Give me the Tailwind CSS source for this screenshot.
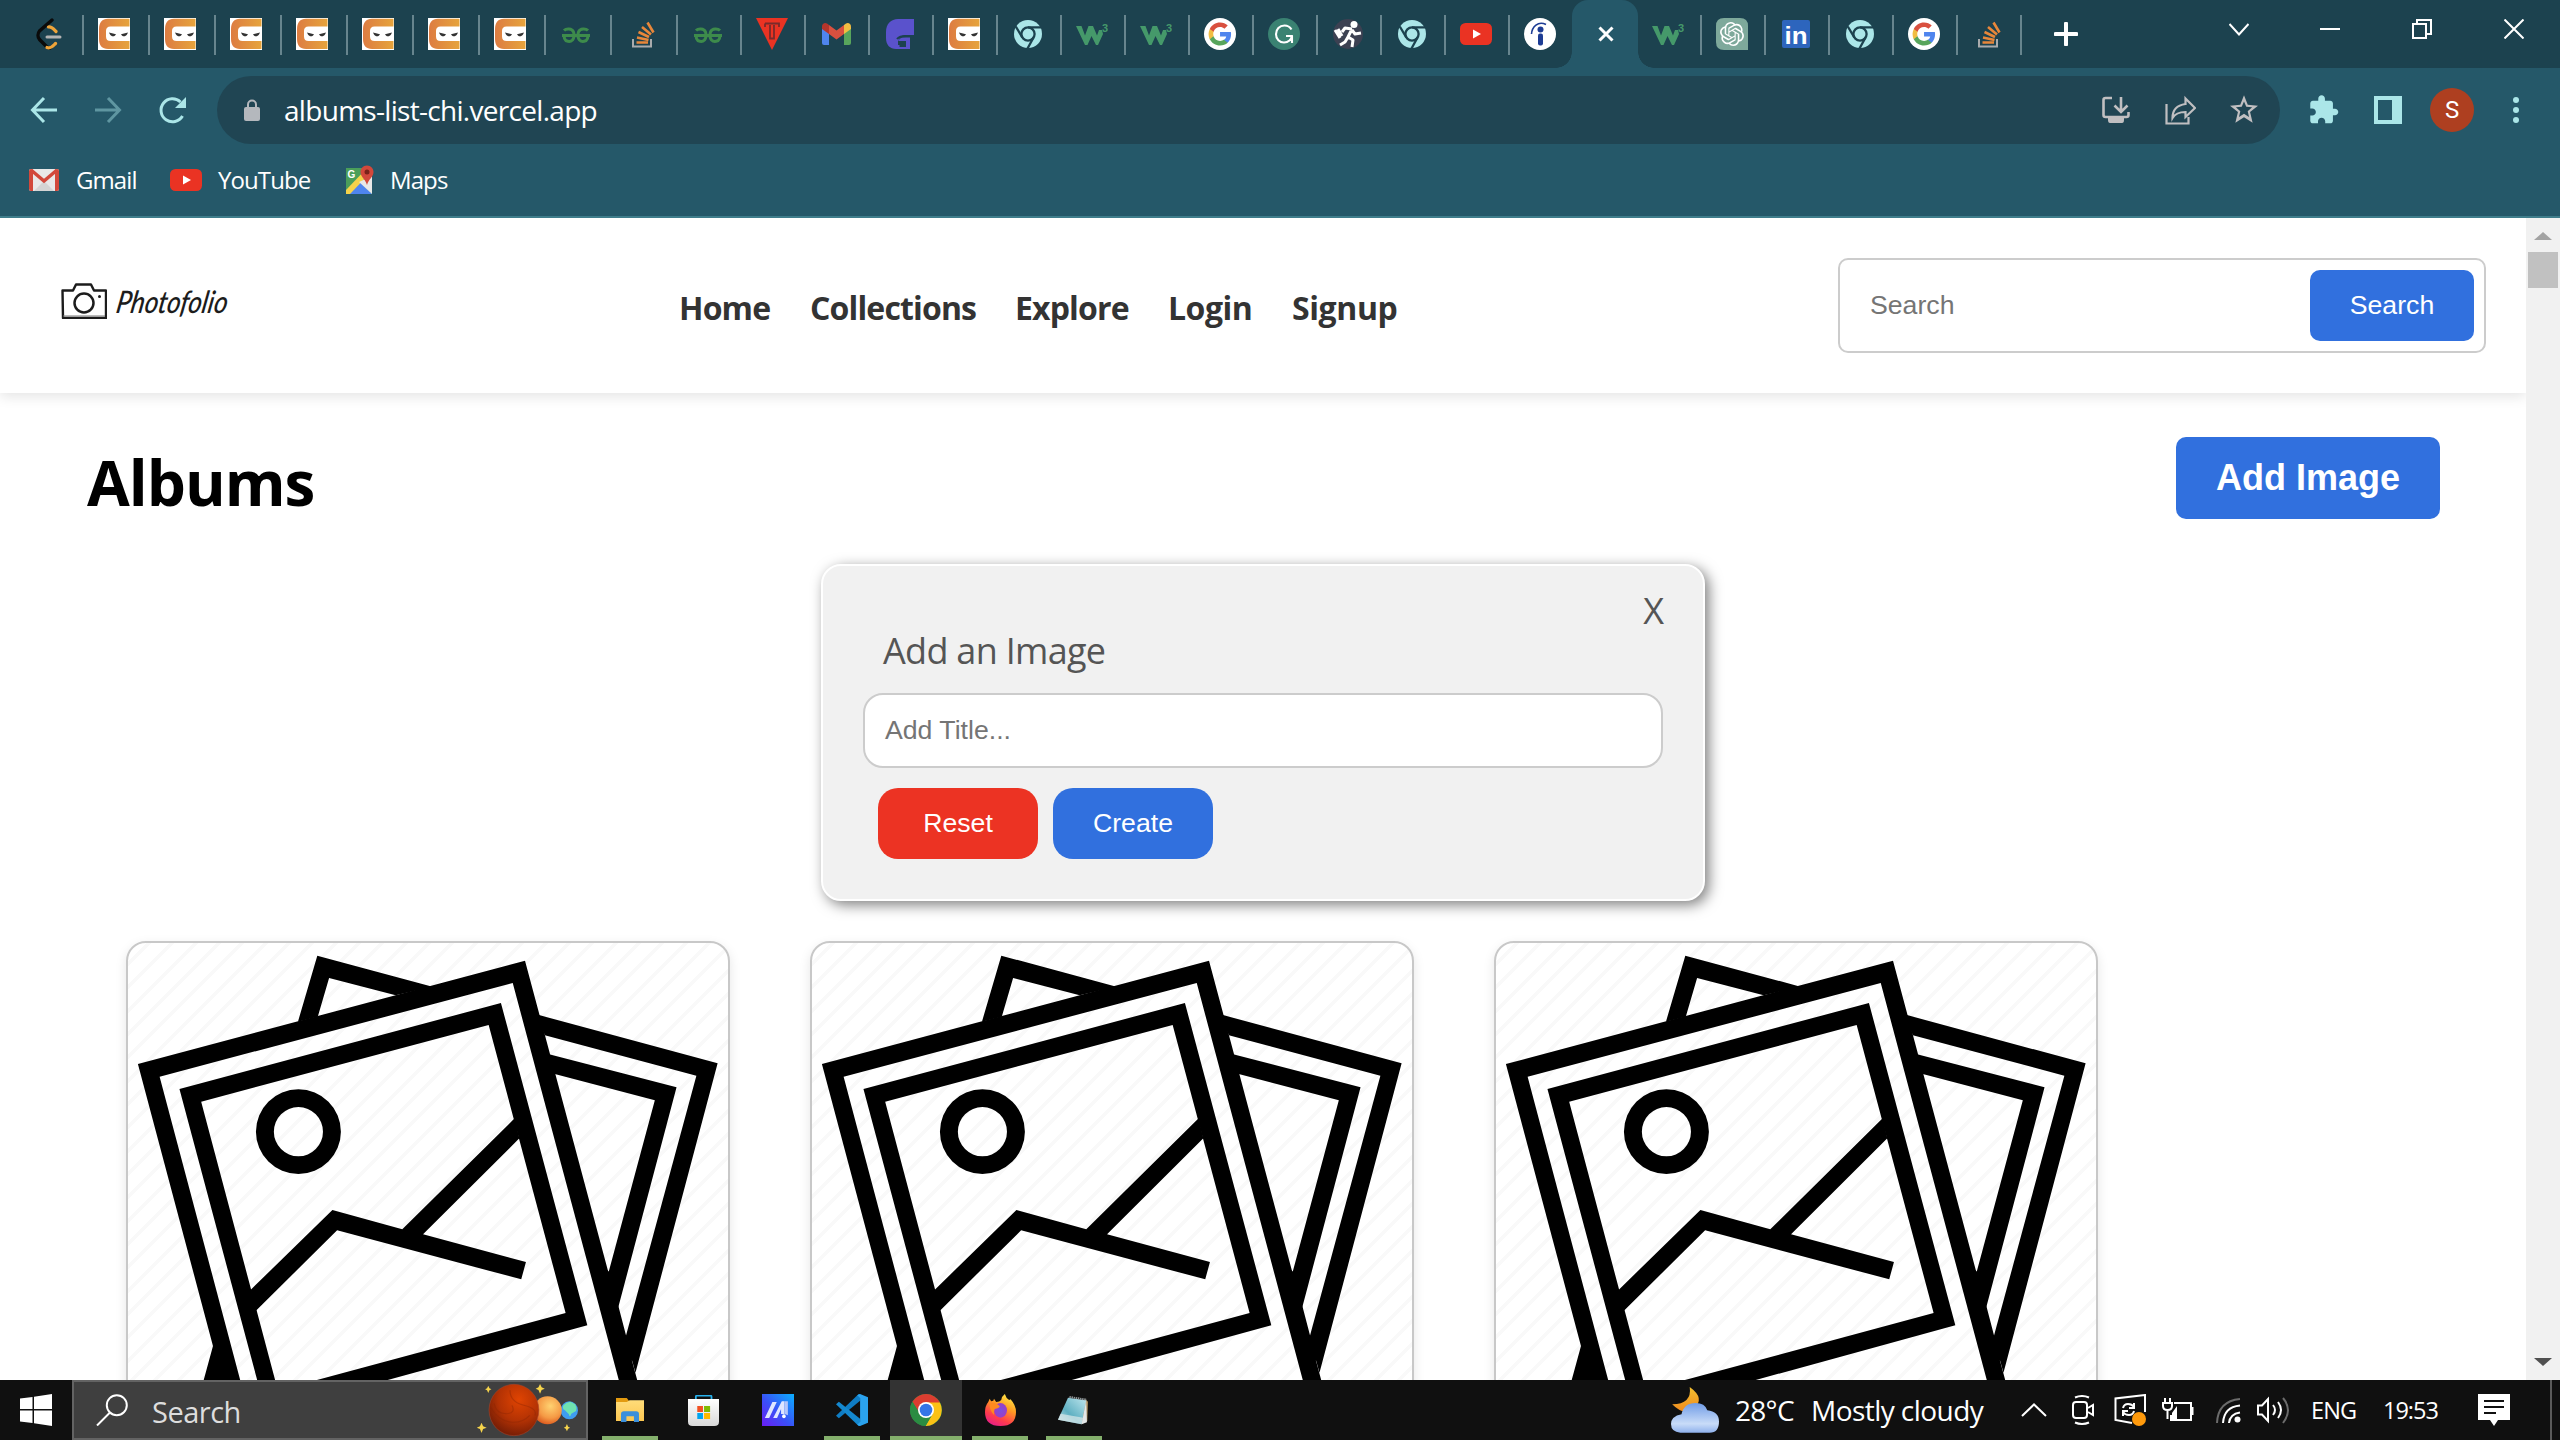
<!DOCTYPE html>
<html lang="en">
<head>
<meta charset="utf-8">
<title>Photofolio</title>
<script src="https://cdn.jsdelivr.net/npm/@tailwindcss/browser@4"></script>
</head>
<body class="w-[2560px] h-[1440px] overflow-hidden flex flex-col bg-white font-['Open_Sans','Noto_Sans',sans-serif]">

<!-- Shared icon symbols -->
<svg width="0" height="0" class="absolute">
  <defs>
    <linearGradient id="ninjaG" x1="0" y1="0" x2="1" y2="0"><stop offset="0" stop-color="#dd7c42"/><stop offset="1" stop-color="#e6a43c"/></linearGradient>
    <linearGradient id="moonG" x1="0" y1="0" x2="0" y2="1"><stop offset="0" stop-color="#f3c030"/><stop offset="1" stop-color="#ef8a1e"/></linearGradient>
    <linearGradient id="cloudG" x1="0" y1="0" x2="0" y2="1"><stop offset="0" stop-color="#6f9be6"/><stop offset=".7" stop-color="#c9dcf8"/><stop offset="1" stop-color="#8fb1ec"/></linearGradient>
    <linearGradient id="folderG" x1="0" y1="0" x2="0" y2="1"><stop offset="0" stop-color="#ffdc79"/><stop offset="1" stop-color="#fcc751"/></linearGradient>
    <linearGradient id="storeG" x1="0" y1="0" x2="0" y2="1"><stop offset="0" stop-color="#ffffff"/><stop offset="1" stop-color="#d9d9d9"/></linearGradient>
    <linearGradient id="asusG" x1="0" y1="1" x2="1" y2="0"><stop offset="0" stop-color="#6a1df5"/><stop offset=".45" stop-color="#3a50f7"/><stop offset="1" stop-color="#0ab0ff"/></linearGradient>
    <linearGradient id="foxG" x1=".8" y1="0" x2=".3" y2="1"><stop offset="0" stop-color="#fff04a"/><stop offset=".4" stop-color="#ff9a22"/><stop offset=".75" stop-color="#ff3c4c"/><stop offset="1" stop-color="#e81f86"/></linearGradient>
    <radialGradient id="foxP"><stop offset="0" stop-color="#7b4de0"/><stop offset="1" stop-color="#9a3fc4"/></radialGradient>
    <linearGradient id="noteG" x1="1" y1="0" x2="0" y2="1"><stop offset="0" stop-color="#bfe6ee"/><stop offset=".6" stop-color="#5fb0c2"/><stop offset="1" stop-color="#c7dfe4"/></linearGradient>
    <radialGradient id="redP" cx=".6" cy=".3" r=".75"><stop offset="0" stop-color="#e04402"/><stop offset=".55" stop-color="#b33204"/><stop offset="1" stop-color="#6f1b05"/></radialGradient>
    <radialGradient id="orP" cx=".6" cy=".35" r=".7"><stop offset="0" stop-color="#ffd271"/><stop offset=".6" stop-color="#f59a45"/><stop offset="1" stop-color="#d9541a"/></radialGradient>
  </defs>
  <symbol id="ninja" viewBox="0 0 32 32"><rect width="32" height="32" fill="#fff"/><path d="M31.500 .7H10C4 .7 1 4.500 1 11v10c0 6.500 3 10 9 10h21.500v-8H12.500c-3 0-4.500-1.500-4.500-4.500v-5.500C8 10 9.500 8.500 12.500 8.500h19z" fill="url(#ninjaG)"/><path d="M11 14.500l7 1.800c-1 2.500-4.500 2.800-6 .2zM30 14.500l-7 1.800c1 2.500 4.500 2.800 6 .2z" fill="#333"/></symbol>
  <symbol id="gfg" viewBox="0 0 32 32"><g fill="none" stroke="#3d8b4b" stroke-width="3"><path d="M2 17.500h28M4 12.500c2-2 8-2.500 9.500 1.500 1 3 .5 6-1 8-2.500 2.500-7 1.500-8-1.500l-.5-3M28 12.500c-2-2-8-2.500-9.500 1.500-1 3-.5 6 1 8 2.500 2.500 7 1.500 8-1.500l.5-3"/></g></symbol>
  <symbol id="so" viewBox="0 0 32 32"><path d="M7 21v7.500h18V21" fill="none" stroke="#a9abad" stroke-width="2"/><g stroke="#e8873a" stroke-width="2.600"><path d="M10.500 24.500h11.500M11 19.500l11.500 2.500M12.500 14l10.500 5M16 9l9 7.500M21.500 4.500l6 10"/></g></symbol>
  <symbol id="chromeC" viewBox="0 0 32 32"><circle cx="16" cy="16" r="14" fill="#abe6e8"/><circle cx="16" cy="16" r="6.600" fill="none" stroke="#1c424f" stroke-width="2.300"/><path d="M16 9.400h13M10.300 19.300L3.800 8.500M21.700 19.300L15.500 30.500" stroke="#1c424f" stroke-width="2.300"/></symbol>
  <symbol id="w3" viewBox="0 0 32 32"><path d="M0 8h5.500L9 17.500 12.500 8H17l4 9.500L23 12h3l1 4-5 11h-2l-4.500-9L11.500 27H9z" fill="#45996a"/></symbol>
  <symbol id="google" viewBox="0 0 32 32"><circle cx="16" cy="16" r="16" fill="#fff"/><g transform="translate(3.500 3.500) scale(1.045)"><path fill="#4f85ee" d="M22.560 12.250c0-.78-.07-1.530-.2-2.250H12v4.260h5.920c-.26 1.370-1.040 2.530-2.210 3.310v2.770h3.570c2.080-1.920 3.280-4.740 3.280-8.090z"/><path fill="#58a55c" d="M12 23c2.970 0 5.460-.98 7.280-2.660l-3.570-2.770c-.98.66-2.230 1.060-3.710 1.060-2.860 0-5.290-1.930-6.160-4.530H2.180v2.840C3.990 20.530 7.700 23 12 23z"/><path fill="#f1bd42" d="M5.840 14.090c-.22-.66-.35-1.360-.35-2.090s.13-1.430.35-2.090V7.070H2.180C1.430 8.550 1 10.220 1 12s.43 3.450 1.180 4.930l2.850-2.220.81-.62z"/><path fill="#d9503f" d="M12 5.380c1.620 0 3.060.56 4.210 1.640l3.150-3.150C17.450 2.090 14.970 1 12 1 7.700 1 3.990 3.470 2.180 7.070l3.660 2.840c.87-2.600 3.300-4.530 6.160-4.530z"/></g></symbol>
  <symbol id="yt" viewBox="0 0 32 32"><rect x="0" y="5" width="32" height="22" rx="5.500" fill="#ea3323"/><path d="M13 11.500v9l8-4.500z" fill="#fff"/></symbol>
  <symbol id="cardArt" viewBox="60 69 1271 1311" preserveAspectRatio="none">
    <g fill="#000">
      <path d="M461 107L705 200 627 226 486 174 462 290 420 305Z"/>
      <path d="M925 283L1309 430 1135 1358 1114 1252 1264 467 943 346Z"/>
      <path d="M948 401L1222 502 1098 1165 1078 1057 1176 541 962 461Z"/>
      <path d="M1068 1040L1080 1057 1100 1165 1116 1252 1130 1320 1120 1320Z"/>
      <path d="M81 432L901 122 1139 1382 1100 1382 875 189 127 470 298 1382 220 1382 240 1278Z"/>
      <path d="M169 507L850 249 1033 1216 605 1382 455 1382 987 1179 824 315 215 545 372 1382 334 1382Z"/>
      <path d="M318 1112L493 870 641 928 879 595 889 655 685 943 903 1026 893 1078 503 931 331 1172Z"/>
      <path fill-rule="evenodd" d="M331 635A90 127 0 0 1 511 635A90 127 0 0 1 331 635ZM369 635A52 74 0 0 0 473 635A52 74 0 0 0 369 635Z"/>
    </g>
  </symbol>
</svg>

<!-- Tab strip -->
<div class="flex h-[68px] shrink-0 bg-[#1c424f] [&>.t]:flex [&>.t]:items-center [&>.t]:pl-[14px] [&>.t]:relative [&>.t]:after:absolute [&>.t]:after:right-0 [&>.t]:after:top-[15px] [&>.t]:after:w-[2px] [&>.t]:after:h-[40px] [&>.t]:after:bg-[#67858e]">
  <div class="t w-[84px]"><svg class="size-8 ml-[19px]" viewBox="0 0 32 32" fill="none" stroke-linecap="round"><path d="M19 2L6.500 13c-2 2.500-2 6 0 8.500l7 7c1 1 2 1.500 3.500 1.500" stroke="#0a0a0a" stroke-width="3.400"/><path d="M15.500 9c3-.5 5 2 7.500 4.500M14 29.500c4 1.500 6-1.500 8.500-4" stroke="#eea43a" stroke-width="3.200"/><path d="M14 19h13" stroke="#b3b3b3" stroke-width="3"/></svg></div>
  <div class="t w-[66px]"><svg class="size-8"><use href="#ninja"/></svg></div>
  <div class="t w-[66px]"><svg class="size-8"><use href="#ninja"/></svg></div>
  <div class="t w-[66px]"><svg class="size-8"><use href="#ninja"/></svg></div>
  <div class="t w-[66px]"><svg class="size-8"><use href="#ninja"/></svg></div>
  <div class="t w-[66px]"><svg class="size-8"><use href="#ninja"/></svg></div>
  <div class="t w-[66px]"><svg class="size-8"><use href="#ninja"/></svg></div>
  <div class="t w-[66px]"><svg class="size-8"><use href="#ninja"/></svg></div>
  <div class="t w-[66px]"><svg class="size-8"><use href="#gfg"/></svg></div>
  <div class="t w-[66px]"><svg class="size-8"><use href="#so"/></svg></div>
  <div class="t w-[64px]"><svg class="size-8"><use href="#gfg"/></svg></div>
  <div class="t w-[64px]"><svg class="size-8" viewBox="0 0 32 32"><path d="M0 0h32L16 32z" fill="#ea3323"/><path d="M9 5.500h14v3.500M9 9V5.500M14 7v13.500h4V7" fill="none" stroke="#7a2b2b" stroke-width="1.800"/></svg></div>
  <div class="t w-[64px]"><svg class="size-8" viewBox="0 0 32 32"><path d="M2 9l7 5v13H4a2 2 0 0 1-2-2z" fill="#4f85ee"/><path d="M31 9l-7 5v13h5a2 2 0 0 0 2-2z" fill="#58a55c"/><path d="M24 7l2-1.500c2-1.500 5 0 5 3V11l-7 5z" fill="#f1bd42"/><path d="M2 8.500c0-3 3-4.500 5-3L9 7v9l-7-5z" fill="#b5352b"/><path d="M9 7l7.500 5.500L24 7v9l-7.500 5.500L9 16z" fill="#d9503f"/></svg></div>
  <div class="t w-[64px]"><svg class="size-8" viewBox="0 0 32 32"><path d="M30 1v16h-8c-6 0-8 5-8 8v6h-2C6 31 2 27 2 20v-6C2 6 7 1 14 1z" fill="#5a52cc"/><path d="M14 30v-5c0-3 2-5.500 5.500-5.500H26V31H14z" fill="#5a52cc"/><path d="M13 21c2-2.500 5-3 9-3h5M15 27v-3h6v5" fill="none" stroke="#1c424f" stroke-width="2"/><rect x="15.500" y="24" width="6" height="5" fill="#1c424f"/></svg></div>
  <div class="t w-[64px]"><svg class="size-8"><use href="#ninja"/></svg></div>
  <div class="t w-[64px]"><svg class="size-8"><use href="#chromeC"/></svg></div>
  <div class="t w-[64px]"><svg class="size-8"><use href="#w3"/><text x="26" y="13.500" font-size="11" font-weight="700" font-family="Liberation Sans" fill="#45996a">3</text></svg></div>
  <div class="t w-[64px]"><svg class="size-8"><use href="#w3"/><text x="26" y="13.500" font-size="11" font-weight="700" font-family="Liberation Sans" fill="#45996a">3</text></svg></div>
  <div class="t w-[64px]"><svg class="size-8"><use href="#google"/></svg></div>
  <div class="t w-[64px]"><svg class="size-8" viewBox="0 0 32 32"><circle cx="16" cy="16" r="16" fill="#3a8272"/><path d="M23.500 11.500C22 9 19.500 7.500 16.500 7.500c-5 0-8.500 3.800-8.500 8.700 0 5 3.700 8.300 8 8.300 4.500 0 7.500-3 7.700-6.500H18M24 17.500V25" fill="none" stroke="#fff" stroke-width="2.100"/></svg></div>
  <div class="t w-[64px]"><svg class="size-8" viewBox="0 0 32 32"><circle cx="16" cy="16" r="15" fill="#3c4152"/><circle cx="22" cy="6.500" r="3.500" fill="#fff"/><path d="M20 11l-4 8 5 3-1 7M16 19l-3 5-5 3M20 11l-7-1-3 4M20 12l3 4 6-1M3 12l5 8M6 11l4 7" fill="none" stroke="#fff" stroke-width="3" stroke-linejoin="round"/></svg></div>
  <div class="t w-[64px]"><svg class="size-8"><use href="#chromeC"/></svg></div>
  <div class="t w-[64px]"><svg class="size-8"><use href="#yt"/></svg></div>
  <div class="flex items-center w-[62px] pl-[14px]"><svg class="size-8" viewBox="0 0 32 32"><circle cx="16" cy="16" r="16" fill="#fff"/><circle cx="16.500" cy="11.500" r="3" fill="#1d3c94"/><rect x="14" y="15.500" width="5" height="12" rx="2" fill="#1d3c94"/><path d="M7.500 16C8 9 14 2.500 22 6.500" fill="none" stroke="#1d3c94" stroke-width="1.600"/></svg></div>
  <div class="flex items-center justify-center w-[66px] rounded-t-[16px] bg-[#255869] relative">
    <span class="absolute bottom-0 -left-4 size-4 bg-[radial-gradient(circle_at_0_0,#1c424f_15.500px,#255869_16px)]"></span>
    <span class="absolute bottom-0 -right-4 size-4 bg-[radial-gradient(circle_at_100%_0,#1c424f_15.500px,#255869_16px)]"></span>
    <svg class="size-4 ml-[1px]" viewBox="0 0 16 16"><path d="M1.500 1.500l13 13M14.500 1.500l-13 13" stroke="#fff" stroke-width="3"/></svg>
  </div>
  <div class="t w-[64px]"><svg class="size-8"><use href="#w3"/><text x="26" y="13.500" font-size="11" font-weight="700" font-family="Liberation Sans" fill="#45996a">3</text></svg></div>
  <div class="t w-[64px]"><svg class="size-8" viewBox="0 0 32 32"><path d="M8 0h16q8 0 8 8v24H8q-8 0-8-8V8q0-8 8-8z" fill="#7ea99b"/><path transform="translate(4 4)" fill="#fff" d="M22.282 9.821a5.985 5.985 0 0 0-.516-4.910 6.046 6.046 0 0 0-6.510-2.900A6.065 6.065 0 0 0 4.981 4.182a5.985 5.985 0 0 0-3.998 2.900 6.046 6.046 0 0 0 .743 7.097 5.980 5.980 0 0 0 .511 4.911 6.051 6.051 0 0 0 6.515 2.900A5.985 5.985 0 0 0 13.260 24a6.056 6.056 0 0 0 5.772-4.206 5.990 5.990 0 0 0 3.998-2.900 6.056 6.056 0 0 0-.748-7.073zm-9.022 12.608a4.476 4.476 0 0 1-2.876-1.041l.142-.080 4.778-2.758a.795.795 0 0 0 .393-.681v-6.737l2.020 1.169a.071.071 0 0 1 .038.052v5.583a4.504 4.504 0 0 1-4.495 4.494zm-9.661-4.125a4.471 4.471 0 0 1-.535-3.014l.142.085 4.783 2.758a.771.771 0 0 0 .781 0l5.843-3.369v2.332a.080.080 0 0 1-.033.062L9.740 19.950a4.499 4.499 0 0 1-6.141-1.646zM2.341 7.896a4.485 4.485 0 0 1 2.366-1.973V11.600a.766.766 0 0 0 .388.677l5.814 3.354-2.020 1.169a.076.076 0 0 1-.071 0l-4.830-2.787A4.504 4.504 0 0 1 2.341 7.872zm16.596 3.856L13.104 8.364 15.119 7.200a.076.076 0 0 1 .071 0l4.830 2.791a4.494 4.494 0 0 1-.677 8.104v-5.677a.790.790 0 0 0-.407-.667zm2.011-3.023l-.142-.085-4.774-2.782a.776.776 0 0 0-.785 0L9.409 9.230V6.897a.066.066 0 0 1 .028-.062l4.830-2.787a4.499 4.499 0 0 1 6.680 4.660zM8.307 12.863l-2.020-1.164a.080.080 0 0 1-.038-.057V6.074a4.499 4.499 0 0 1 7.376-3.454l-.142.081L8.704 5.459a.795.795 0 0 0-.393.681zm1.098-2.365l2.602-1.500 2.607 1.500v2.999l-2.597 1.500-2.607-1.500Z"/></svg></div>
  <div class="t w-[64px]"><svg class="size-8" viewBox="0 0 32 32"><rect x="2" y="2" width="28" height="28" rx="2" fill="#2d65bd"/><text x="4.500" y="25.500" font-family="Liberation Sans" font-weight="700" font-size="24" textLength="23" lengthAdjust="spacingAndGlyphs" fill="#fff">in</text></svg></div>
  <div class="t w-[64px]"><svg class="size-8"><use href="#chromeC"/></svg></div>
  <div class="t w-[64px]"><svg class="size-8"><use href="#google"/></svg></div>
  <div class="t w-[64px]"><svg class="size-8"><use href="#so"/></svg></div>
  <div class="flex items-center pl-8"><svg class="size-6" viewBox="0 0 24 24"><path d="M12 1.500v21M1.500 12h21" stroke="#fff" stroke-width="4" stroke-linecap="round"/></svg></div>
  <div class="flex items-start ml-auto pt-[19px] pr-9 gap-[72px]">
    <svg class="size-5 ml-[1px] mr-[-1px]" viewBox="0 0 20 20"><path d="M.5 5l9.500 10.500L19.500 5" fill="none" stroke="#fff" stroke-width="2"/></svg>
    <svg class="size-5" viewBox="0 0 20 20"><path d="M0 10h20" stroke="#fff" stroke-width="2"/></svg>
    <svg class="size-5" viewBox="0 0 20 20"><path d="M1 5h13v14H1zM5 5V1h14v14h-5" fill="none" stroke="#fff" stroke-width="2"/></svg>
    <svg class="size-5" viewBox="0 0 20 20"><path d="M.5 .5l19 19M19.500 .5l-19 19" stroke="#fff" stroke-width="2"/></svg>
  </div>
</div>

<!-- Toolbar -->
<div class="flex items-center h-[84px] shrink-0 bg-[#255869] pl-7">
  <div class="flex gap-8 w-[189px]">
    <svg class="size-8" viewBox="0 0 32 32"><path d="M29 16H5M16 4L4.500 16 16 28" fill="none" stroke="#abe6e8" stroke-width="3"/></svg>
    <svg class="size-8" viewBox="0 0 32 32"><path d="M3 16h24M16 4l11.500 12L16 28" fill="none" stroke="#5f96a1" stroke-width="3"/></svg>
    <svg class="size-8" viewBox="0 0 32 32"><path d="M26.500 22A11.500 11.500 0 1 1 24.500 8" fill="none" stroke="#abe6e8" stroke-width="3"/><path d="M30 3v11H19z" fill="#abe6e8"/></svg>
  </div>
  <div class="flex items-center w-[2063px] h-[68px] rounded-full bg-[#204553] pl-[27px] pr-[20px]">
    <svg class="w-4 h-[22px]" viewBox="0 0 16 22"><path d="M4 9V5.500a4 4 0 0 1 8 0V9" fill="none" stroke="#b4b8bd" stroke-width="2"/><rect y="8" width="16" height="14" rx="2" fill="#b4b8bd"/></svg>
    <span class="pl-[24px] text-[28px] leading-none tracking-[-0.7px] text-white whitespace-nowrap">albums-list-chi.vercel.app</span>
    <div class="flex items-center gap-8 ml-auto">
      <svg class="size-8" viewBox="0 0 32 32"><path d="M12 4H5.500Q3.500 4 3.500 6v15q0 2 2 2h21q2 0 2-2v-3" fill="none" stroke="#c0bfc1" stroke-width="2.600"/><path d="M8 23h16v3q0 3-2 3H10q-2 0-2-3z" fill="#c0bfc1"/><path d="M21 3v13M14.500 11.500L21 18l6.500-6.500" fill="none" stroke="#c0bfc1" stroke-width="2.600"/></svg>
      <svg class="size-8" viewBox="0 0 32 32"><path d="M2.500 10v19.500h22V23" fill="none" stroke="#c0bfc1" stroke-width="2.200"/><path d="M21.500 4.500L31 14l-9.500 9v-5c-6 0-10 1-13 6 0-9 6-13 13-14z" fill="none" stroke="#c0bfc1" stroke-width="2.200"/></svg>
      <svg class="size-8" viewBox="1 0.500 22 24"><path fill="#c0bfc1" d="M22.500 9.240l-7.690-.62L12 1.500 9.190 8.630 1.500 9.240l5.960 4.730L5.520 22 12 17.870 18.480 22l-1.930-8.030zM12 15.400l-3.760 2.270 1-4.280-3.320-2.880 4.380-.38L12 6.100l1.710 4.040 4.380.38-3.320 2.880 1 4.280z"/></svg>
    </div>
  </div>
  <div class="flex items-center pl-[28px] gap-8">
    <svg class="size-8" viewBox="0.300 0 24 24"><path fill="#abe6e8" d="M20.500 11H19V7c0-1.100-.9-2-2-2h-4V3.500C13 2.120 11.880 1 10.500 1S8 2.120 8 3.500V5H4c-1.100 0-1.990.9-1.990 2v3.800H3.500c1.490 0 2.700 1.210 2.700 2.700s-1.210 2.700-2.700 2.700H2V20c0 1.100.9 2 2 2h3.800v-1.500c0-1.490 1.210-2.700 2.700-2.700 1.490 0 2.700 1.210 2.700 2.700V22H17c1.100 0 2-.9 2-2v-4h1.500c1.380 0 2.500-1.120 2.500-2.500S21.880 11 20.500 11z"/></svg>
    <svg class="size-8" viewBox="0 0 32 32"><path d="M2 2h28v28H2zM6 6v20h14V6z" fill="#abe6e8" fill-rule="evenodd"/></svg>
  </div>
  <div class="flex items-center justify-center ml-[26px] size-11 rounded-full bg-[#ae3f20] text-white text-[24px] leading-none font-['Roboto']">S</div>
  <div class="flex flex-col gap-1 ml-[39px]"><i class="w-[6px] h-[6px] rounded-full bg-[#abe6e8]"></i><i class="w-[6px] h-[6px] rounded-full bg-[#abe6e8]"></i><i class="w-[6px] h-[6px] rounded-full bg-[#abe6e8]"></i></div>
</div>

<!-- Bookmarks -->
<div class="flex items-center h-[66px] shrink-0 bg-[#255869] pl-7 pb-[8px] border-b-2 border-[#3f7d8b] text-[24px] leading-none tracking-[-0.9px] text-white">
  <svg class="size-8" viewBox="0 0 32 32"><rect x="1" y="5" width="30" height="22" rx="2" fill="#e9e8e8"/><path d="M6 27l10-10 10 10z" fill="#d4d4d4"/><path d="M1 7q0-2 2-2l2 1v21H3q-2 0-2-2zM31 7q0-2-2-2l-2 1v21h2q2 0 2-2z" fill="#d2483b"/><path d="M3 6l13 11L29 6" fill="none" stroke="#d2483b" stroke-width="3.500"/></svg>
  <span class="w-[93px] pl-[16px]">Gmail</span>
  <svg class="size-8 ml-[17px]"><use href="#yt"/></svg>
  <span class="w-[141px] pl-[16px]">YouTube</span>
  <svg class="size-8" viewBox="0 0 32 32"><path d="M3 4h26v26H3z" fill="#4a9e5a"/><path d="M3 30L16 17l13 13z" fill="#4f85ee"/><path d="M3 26L24 4l5 3L7 30H3z" fill="#f5d24a"/><path d="M16 18l13 12V12z" fill="#e8e8e8"/><path d="M24 1.500c4 0 6.500 3 6.500 6.500 0 5-5 7-6.500 13-1.500-6-6.500-8-6.500-13 0-3.500 2.500-6.500 6.500-6.500z" fill="#d2483b"/><circle cx="24" cy="8" r="2.500" fill="#7a2219"/><text x="4.500" y="13.500" font-size="10" font-weight="700" font-family="Liberation Sans" fill="#fff">G</text></svg>
  <span class="pl-[15px]">Maps</span>
</div>

<!-- Page -->
<div class="flex flex-1 min-h-0">
  <div class="flex flex-col w-[2526px] overflow-hidden">
    <header class="flex items-center h-[175px] shrink-0 pl-[61px] pr-[40px] shadow-[0_4px_12px_rgba(0,0,0,0.1)]">
      <div class="flex items-center w-[618px] pb-[9px]">
        <svg class="w-[46px] h-[36px]" viewBox="0 0 46 36" fill="none" stroke="#1c1c1c" stroke-width="2.400"><path d="M1.500 7.500H12l3-6h15l3 6h12V35h-43z" stroke-linejoin="round"/><path d="M2 33h42" stroke="#777" stroke-width="1"/><circle cx="23" cy="20" r="9.500" stroke-width="2.500"/><circle cx="38.500" cy="13.500" r="1.500" fill="#1c1c1c" stroke="none"/></svg>
        <span class="inline-block origin-left -skew-x-12 scale-x-[0.84] pl-[12px] font-['Lato'] italic font-medium text-[31px] leading-none text-[#1c1c1c]">Photofolio</span>
      </div>
      <nav class="flex pt-[4px] text-[32px] leading-none tracking-[-0.85px] font-bold text-[#333]">
        <span class="w-[131px]">Home</span><span class="w-[205px]">Collections</span><span class="w-[153px]">Explore</span><span class="w-[124px] tracking-[-0.5px]">Login</span><span class="tracking-[-0.4px]">Signup</span>
      </nav>
      <div class="flex items-center justify-between ml-auto w-[648px] h-[95px] rounded-[10px] border-2 border-[#ccc] pl-[30px] pr-[10px] font-['Liberation_Sans'] text-[26.670px]">
        <span class="text-[#757575] pb-[2px]">Search</span>
        <button class="w-[164px] h-[71px] pb-[2px] rounded-[10px] bg-[#3170de] text-white">Search</button>
      </div>
    </header>

    <div class="flex items-center justify-between h-[82px] shrink-0 mt-[44px] px-[86px]">
      <h1 class="pt-[8px] pl-[1px] text-[62px] leading-none tracking-[-1px] font-bold text-black">Albums</h1>
      <button class="w-[264px] h-[82px] rounded-[10px] bg-[#3170de] text-white font-['Liberation_Sans'] font-bold text-[36px]">Add Image</button>
    </div>

    <form class="flex flex-col shrink-0 w-[884px] h-[337px] mt-[45px] mx-auto px-[40px] pt-[25px] rounded-[20px] border-2 border-white bg-[#f1f1f1] shadow-[4px_4px_14px_rgba(0,0,0,0.5)]">
      <span class="self-end h-[40px] mr-[-1px] text-[36px] leading-[40px] text-[#555]">X</span>
      <span class="self-start ml-[20px] h-[40px] text-[36px] leading-[40px] tracking-[-0.7px] text-[#555]">Add an Image</span>
      <div class="flex items-center h-[75px] mt-[22px] pl-[20px] pb-[2px] rounded-[20px] border-2 border-[#ccc] bg-white font-['Liberation_Sans'] text-[26.670px] text-[#757575]">Add Title...</div>
      <div class="flex gap-[15px] mt-[20px] pl-[15px] font-['Liberation_Sans'] text-[26.670px] text-white">
        <button type="button" class="w-[160px] h-[71px] pb-[2px] rounded-[20px] bg-[#ec3323]">Reset</button>
        <button type="button" class="w-[160px] h-[71px] pb-[2px] rounded-[20px] bg-[#3170de]">Create</button>
      </div>
    </form>

    <div class="flex gap-[80px] mt-[40px] pl-[126px]">
      <div class="w-[604px] h-[620px] shrink-0 rounded-[20px] border-2 border-[#c8c8c8] shadow-[0_4px_12px_rgba(0,0,0,0.1)] overflow-hidden bg-[repeating-linear-gradient(135deg,#fff_0_13px,#f9f9f9_13px_16.500px)]"><svg class="block w-[600px] h-[437px]"><use href="#cardArt"/></svg></div>
      <div class="w-[604px] h-[620px] shrink-0 rounded-[20px] border-2 border-[#c8c8c8] shadow-[0_4px_12px_rgba(0,0,0,0.1)] overflow-hidden bg-[repeating-linear-gradient(135deg,#fff_0_13px,#f9f9f9_13px_16.500px)]"><svg class="block w-[600px] h-[437px]"><use href="#cardArt"/></svg></div>
      <div class="w-[604px] h-[620px] shrink-0 rounded-[20px] border-2 border-[#c8c8c8] shadow-[0_4px_12px_rgba(0,0,0,0.1)] overflow-hidden bg-[repeating-linear-gradient(135deg,#fff_0_13px,#f9f9f9_13px_16.500px)]"><svg class="block w-[600px] h-[437px]"><use href="#cardArt"/></svg></div>
    </div>
  </div>
  <!-- Scrollbar -->
  <div class="flex flex-col items-center w-[34px] bg-[#f1f1f1] pt-[14px] pb-[14px]">
    <svg class="w-[18px] h-[8px]" viewBox="0 0 18 8"><path d="M9 0l9 8H0z" fill="#a3a3a3"/></svg>
    <div class="w-[30px] h-[36px] mt-[12px] bg-[#c1c1c1]"></div>
    <svg class="w-[18px] h-[8px] mt-auto" viewBox="0 0 18 8"><path d="M9 8l9-8H0z" fill="#505050"/></svg>
  </div>
</div>

<!-- Taskbar -->
<div class="flex h-[60px] shrink-0 bg-[#101010] text-white">
  <div class="flex items-center pl-5 w-[72px]"><svg class="size-8" viewBox="0 0 32 32" fill="#fff"><path d="M0 4.500L12.500 3v12H0zM14 2.800L32 0v15H14zM0 16.500h12.500V29L0 27.500zM14 16.500h18V32l-18-2.800z"/></svg></div>
  <div class="flex items-center w-[516px] border-2 border-[#636363] bg-[#3f3f3f] pl-[22px]">
    <svg class="size-8" viewBox="0 0 32 32" fill="none" stroke="#fff" stroke-width="2"><circle cx="20.800" cy="11.200" r="10"/><path d="M14 18.500L1 31.500"/></svg>
    <span class="pl-[24px] pt-[2px] text-[29px] leading-none tracking-[-0.5px] text-[#ddd]">Search</span>
    <svg class="w-[102px] h-[54px] ml-auto mr-[8px]" viewBox="1204 38 258 162" preserveAspectRatio="none"><ellipse cx="1440" cy="120" rx="22" ry="27" fill="#3f9df0"/><path d="M1425 105q8-10 18-11l12 8q5 10 2 20l-12 8q-4 14-6 2l-10-12q-8-4-4-15z" fill="#6fe3b0"/><ellipse cx="1385" cy="120" rx="36" ry="42" fill="url(#orP)"/><ellipse cx="1300" cy="119" rx="63" ry="77" fill="url(#redP)" stroke="#a8452a" stroke-width="1.500"/><path d="M1290 60q0 35 35 45t28 30M1240 110q20 40 50 45t50-20M1250 100q5 30 30 30t15-25" fill="none" stroke="#8a2504" stroke-width="3" opacity=".4"/><g fill="#f6d44c"><path d="M1235 46l3 8 5 3-5 3-3 8-3-8-5-3 5-3zM1366 41l4 10 8 4-8 4-4 11-4-11-7-4 7-4zM1218 157l4 11 9 4-9 4-4 12-4-12-8-4 8-4zM1434 161l3 8 5 3-5 3-3 8-3-8-5-3 5-3z"/></g></svg>
  </div>
  <div class="flex ml-[5px]">
    <div class="flex items-center justify-center w-[74px] relative after:absolute after:bottom-0 after:w-[56px] after:h-[4px] after:bg-[#84b06c]"><svg class="w-[28px] h-[24px]" viewBox="101 84 78 72" preserveAspectRatio="none"><path d="M101 84h30l6 8v14h-36z" fill="#e39b10"/><path d="M101 96h30l8-5h40v62h-78z" fill="url(#folderG)"/><path d="M115 156v-24q0-8 8-8h34q8 0 8 8v24h-14v-17h-21v17z" fill="#3c8fdb"/></svg></div>
    <div class="flex items-center justify-center w-[74px] pr-[2px]"><svg class="w-[31px] h-[31px]" viewBox="302 75 87 93" preserveAspectRatio="none"><path d="M324 92V80q0-3 3-3h38q3 0 3 3v12" fill="none" stroke="#28b1ec" stroke-width="5"/><path d="M302 87h87v68q0 13-13 13h-61q-13 0-13-13z" fill="url(#storeG)"/><path d="M328 108h16v18h-16z" fill="#f25022"/><path d="M347 108h17v18h-17z" fill="#7fba00"/><path d="M328 129h16v18h-16z" fill="#00a4ef"/><path d="M347 129h17v18h-17z" fill="#ffb900"/></svg></div>
    <div class="flex items-center justify-center w-[74px]"><svg class="size-8" viewBox="510 72 89 96" preserveAspectRatio="none"><rect x="510" y="72" width="89" height="96" fill="url(#asusG)"/><path d="M518 144l21-48h12l-21 48zM541 144l24-50h7v38h-9v-15l-11 27z" fill="#dfe6ff"/><path d="M572 94h10v42l-10-5z" fill="#b4c6fb"/><ellipse cx="571" cy="139" rx="5" ry="6" fill="#fff"/></svg></div>
    <div class="flex items-center justify-center w-[74px] relative after:absolute after:bottom-0 after:w-[56px] after:h-[4px] after:bg-[#84b06c]"><svg class="size-8" viewBox="717 72 89 96" preserveAspectRatio="none"><path d="M717 137l8 8 59-53V72h-4z" fill="#0f7dc4"/><path d="M717 103l8-8 59 51v22h-4z" fill="#1488cf"/><path d="M784 72l22 10v76l-22 10-8-4 8-8V84l-8-8z" fill="#2ba3ee"/></svg></div>
    <div class="flex items-center justify-center w-[72px] ml-[1px] mr-[1px] bg-[#333] border-b-4 border-[#84b06c] pt-[4px]"><svg class="size-8" viewBox="0 0 32 32"><circle cx="16" cy="16" r="16" fill="#2b8c42"/><path d="M16 16L2.500 7.500A16 16 0 0 1 29.900 8.200z" fill="#dc3d30"/><path d="M16 8.500h13.900A16 16 0 0 1 15.500 32l7-12z" fill="#fbc116"/><path d="M2.500 7.500L9.500 20l6.500-4-2-7.500 5-1z" fill="#dc3d30"/><path d="M2.300 7.800A16 16 0 0 0 15.500 32l6.500-11-12-1.500z" fill="#2b8c42"/><circle cx="16" cy="16" r="8" fill="#fff"/><circle cx="16" cy="16" r="6.300" fill="#3475e8"/></svg></div>
    <div class="flex items-center justify-center w-[74px] relative after:absolute after:bottom-0 after:w-[56px] after:h-[4px] after:bg-[#84b06c]"><svg class="w-[31px] h-8" viewBox="1133 70 86 96" preserveAspectRatio="none"><path d="M1188 70q3 12 12 18l4-2q15 18 15 38 0 42-43 42t-43-42q0-18 9-30l4-10 4 8 6-2 2-6 6 10q10 0 14-6 2-12 10-18z" fill="url(#foxG)"/><ellipse cx="1176" cy="119" rx="18" ry="22" fill="url(#foxP)"/><path d="M1146 97q20-2 28 10-2 6-14 8-4 10-2 18-14-16-12-36z" fill="#ff8a1f"/></svg></div>
    <div class="flex items-center justify-center w-[74px] pr-[2px] relative after:absolute after:bottom-0 after:left-[9px] after:w-[56px] after:h-[4px] after:bg-[#84b06c]"><svg class="w-[30px] h-[29px]" viewBox="1338 75 84 87" preserveAspectRatio="none"><path d="M1414 84l8 8-2 58-16 10z" fill="#a98b5a"/><path d="M1366 80l51 8-13 72-66-14z" fill="url(#noteG)"/><path d="M1417 88l2 66-15 6z" fill="#e3e7e8"/><path d="M1370 78l48 8" stroke="#8f9597" stroke-width="6" stroke-dasharray="4 2"/><path d="M1345 128l64 12-5 20-66-14z" fill="#dbe8ea" opacity=".7"/></svg></div>
  </div>
  <!-- Tray -->
  <div class="flex items-center ml-auto">
    <svg class="w-[48px] h-[46px] mr-[16px]" viewBox="54 138 82 139" preserveAspectRatio="none"><path d="M86 138q28 36 6 66-16 22-36-14 34 0 30-52z" fill="url(#moonG)"/><path d="M70 276q-16-2-16-26t18-30q4-34 24-34 16 0 20 22 20 4 20 34 0 34-16 34z" fill="url(#cloudG)"/></svg>
    <span class="w-[76px] text-[28px] leading-none tracking-[-0.7px]">28°C</span>
    <span class="w-[210px] text-[28px] leading-none tracking-[-0.55px] whitespace-nowrap">Mostly cloudy</span>
    <svg class="w-[26px] h-[14px] mr-[24px]" viewBox="0 0 26 14"><path d="M1 13L13 1.500 25 13" fill="none" stroke="#fff" stroke-width="2"/></svg>
    <svg class="w-[24px] h-[30px] mr-[19px]" viewBox="0 0 24 30" fill="none" stroke="#fff" stroke-width="2"><rect x="2" y="7" width="14" height="16" rx="3"/><path d="M17 13l5-3v10l-5-3M4 2.500q7-3 14 0M4 27.500q7 3 14 0"/></svg>
    <svg class="size-8 mr-[16px]" viewBox="0 0 32 32" fill="none" stroke="#fff" stroke-width="2"><path d="M18 29L1.500 26V4.500L31 1v17"/><path d="M9 14q1-4 5-4t6 3M20 17q-1 4-5 4t-6-3M20 9v5h-5M9 22v-5h5"/><circle cx="25" cy="25" r="7" fill="#ff9a0c" stroke="none"/></svg>
    <svg class="w-[32px] h-[24px] mr-[22px]" viewBox="0 0 32 24" fill="none" stroke="#fff" stroke-width="2"><path d="M12 5h17v17H9V17M30.500 9v8M3 0v5M8 0v5M1 5h9v3q0 4-4.500 4T1 8zM5.500 12v9"/><path d="M10 21V15l5-7v13z" fill="#fff" stroke="none"/></svg>
    <svg class="w-[25px] h-[25px] mr-[16px]" viewBox="0 0 25 25" fill="none" stroke="#fff" stroke-width="2"><path d="M1 25Q2 3 24 1" stroke="#6b6b6b"/><path d="M7 25Q8 9 24 7.500M13 25q1-9 11-10.500"/><circle cx="21.500" cy="21.500" r="3" fill="#fff" stroke="none"/></svg>
    <svg class="w-[33px] h-[28px] mr-[21px]" viewBox="0 0 33 28" fill="none" stroke="#fff" stroke-width="2"><path d="M1 9.500h4L11 3v22l-6-6.500H1zM16 9q4 5 0 10M21 6q6 8 0 16"/><path d="M26 2q10 12 0 25" stroke="#6b6b6b"/></svg>
    <span class="w-[72px] pt-[2px] text-[23.500px] leading-none tracking-[-0.9px]">ENG</span>
    <span class="w-[95px] pt-[2px] text-[23.500px] leading-none tracking-[-1px]">19:53</span>
    <svg class="size-8 mr-[40px]" viewBox="0 0 32 32"><path d="M0 0h32v26H20l-4 6-4-6H0z" fill="#fff"/><path d="M6 7h20M6 13h20M6 19h12" stroke="#101010" stroke-width="2"/></svg>
    <div class="w-[2px] h-full mr-[8px] bg-[#5a5a5a]"></div>
  </div>
</div>
</body>
</html>
